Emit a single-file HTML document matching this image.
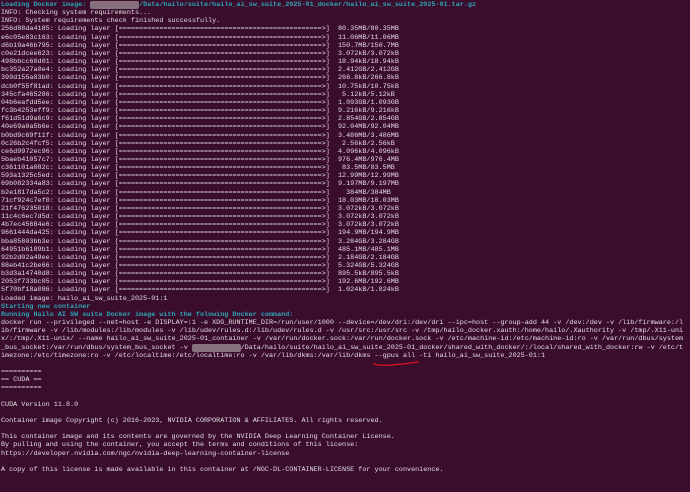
<!DOCTYPE html>
<html><head><meta charset="utf-8"><style>
html,body{margin:0;padding:0;width:690px;height:492px;overflow:hidden;background:#3a0d2c;}
pre{margin:0;padding:1px 0 0 1px;font-family:"Liberation Mono","DejaVu Sans Mono",monospace;font-size:6.77px;line-height:8.15px;color:#e3dde0;white-space:pre;}
.c{color:#2fa4b6;font-weight:bold;}
.b{background:#86707e;color:transparent;border-radius:2px;}
svg{position:absolute;left:0;top:0;}
</style></head><body>
<pre><span class="c">Loading Docker image: <span class="b">            </span>/Data/hailo/suite/hailo_ai_sw_suite_2025-01_docker/hailo_ai_sw_suite_2025-01.tar.gz</span>
INFO: Checking system requirements...
INFO: System requirements check finished successfully.
256d88da4185: Loading layer [==================================================>]  80.35MB/80.35MB
e6c05e83c163: Loading layer [==================================================>]  11.06MB/11.06MB
d6b19a46b795: Loading layer [==================================================>]  150.7MB/150.7MB
c0e21dcee623: Loading layer [==================================================>]  3.072kB/3.072kB
498bbcc60d01: Loading layer [==================================================>]  18.94kB/18.94kB
bc352a27a0e4: Loading layer [==================================================>]  2.412GB/2.412GB
399d155a03b0: Loading layer [==================================================>]  266.8kB/266.8kB
dcb0f55f81ad: Loading layer [==================================================>]  10.75kB/10.75kB
345cfa465286: Loading layer [==================================================>]   5.12kB/5.12kB
04b6eafdd5ee: Loading layer [==================================================>]  1.093GB/1.093GB
fc3b4253eff9: Loading layer [==================================================>]  9.216kB/9.216kB
f61d51d9a6c9: Loading layer [==================================================>]  2.854GB/2.854GB
40e69a0a5b6e: Loading layer [==================================================>]  92.04MB/92.04MB
b0bd9c69f11f: Loading layer [==================================================>]  3.486MB/3.486MB
0c26b2c4fcf5: Loading layer [==================================================>]   2.56kB/2.56kB
ce6d9972ec96: Loading layer [==================================================>]  4.096kB/4.096kB
5baeb41057c7: Loading layer [==================================================>]  976.4MB/976.4MB
c361101a082c: Loading layer [==================================================>]   83.5MB/83.5MB
593a1325c5ed: Loading layer [==================================================>]  12.99MB/12.99MB
69b082334a83: Loading layer [==================================================>]  9.197MB/9.197MB
b2e1817da5c2: Loading layer [==================================================>]    384MB/384MB
71cf924c7ef0: Loading layer [==================================================>]  18.03MB/18.03MB
21f476235018: Loading layer [==================================================>]  3.072kB/3.072kB
11c4c6ec7d5d: Loading layer [==================================================>]  3.072kB/3.072kB
4b7ec45684e6: Loading layer [==================================================>]  3.072kB/3.072kB
9661444da425: Loading layer [==================================================>]  194.9MB/194.9MB
bba85803bb3e: Loading layer [==================================================>]  3.284GB/3.284GB
64951b6189b1: Loading layer [==================================================>]  485.1MB/485.1MB
92b2d02a49ee: Loading layer [==================================================>]  2.184GB/2.184GB
88eb41c2be66: Loading layer [==================================================>]  5.324GB/5.324GB
b3d3a14740d8: Loading layer [==================================================>]  895.5kB/895.5kB
2053f733bc05: Loading layer [==================================================>]  192.6MB/192.6MB
5f70bf18a086: Loading layer [==================================================>]  1.024kB/1.024kB
Loaded image: hailo_ai_sw_suite_2025-01:1
<span class="c">Starting new container</span>
<span class="c">Running Hailo AI SW suite Docker image with the folowing Docker command:</span>
docker run --privileged --net=host -e DISPLAY=:1 -e XDG_RUNTIME_DIR=/run/user/1000 --device=/dev/dri:/dev/dri --ipc=host --group-add 44 -v /dev:/dev -v /lib/firmware:/l
ib/firmware -v /lib/modules:/lib/modules -v /lib/udev/rules.d:/lib/udev/rules.d -v /usr/src:/usr/src -v /tmp/hailo_docker.xauth:/home/hailo/.Xauthority -v /tmp/.X11-uni
x/:/tmp/.X11-unix/ --name hailo_ai_sw_suite_2025-01_container -v /var/run/docker.sock:/var/run/docker.sock -v /etc/machine-id:/etc/machine-id:ro -v /var/run/dbus/system
_bus_socket:/var/run/dbus/system_bus_socket -v <span class="b">            </span>/Data/hailo/suite/hailo_ai_sw_suite_2025-01_docker/shared_with_docker/:/local/shared_with_docker:rw -v /etc/t
imezone:/etc/timezone:ro -v /etc/localtime:/etc/localtime:ro -v /var/lib/dkms:/var/lib/dkms --gpus all -ti hailo_ai_sw_suite_2025-01:1

==========
== CUDA ==
==========

CUDA Version 11.8.0

Container image Copyright (c) 2016-2023, NVIDIA CORPORATION &amp; AFFILIATES. All rights reserved.

This container image and its contents are governed by the NVIDIA Deep Learning Container License.
By pulling and using the container, you accept the terms and conditions of this license:
https://developer.nvidia.com/ngc/nvidia-deep-learning-container-license

A copy of this license is made available in this container at /NGC-DL-CONTAINER-LICENSE for your convenience.
</pre>
<svg width="690" height="492"><path d="M374 364 Q380 366 392 365 Q405 364 418 362" stroke="#e0101a" stroke-width="1.3" fill="none" stroke-linecap="round"/></svg>
</body></html>
